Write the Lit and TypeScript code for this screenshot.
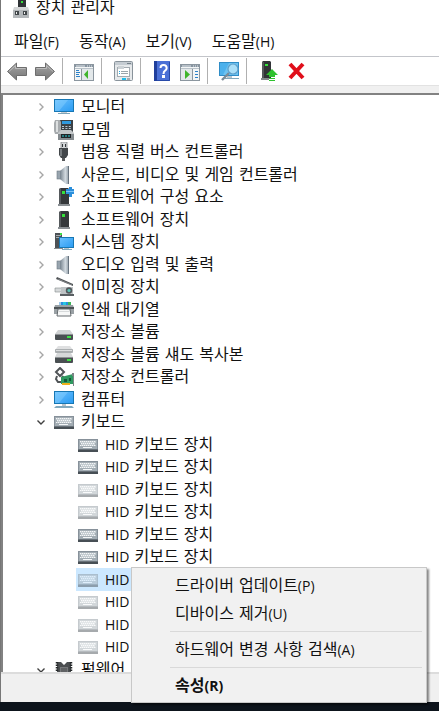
import { LitElement, html, css, svg, TemplateResult } from "lit";
import { customElement, property, state } from "lit/decorators.js";
import { classMap } from "lit/directives/class-map.js";

const screenPart = svg`
  <rect x="0" y="2" width="20" height="13" fill="#1777b4"/>
  <rect x="1" y="3" width="18" height="11" fill="url(#scr)"/>
  <path d="M1 3H14L5 14H1Z" fill="#8fd4ff" opacity=".4"/>
  <path d="M7 15h6v1H7z" fill="#c4ccd2"/><path d="M4 16h12v1H4z" fill="#7fa6ba"/>`;

const keyboardPart = svg`
  <rect x="0" y="4" width="20" height="13" fill="#87919a"/>
  <rect x="1" y="5" width="18" height="9" fill="#a3adb4"/>
  <path d="M2 6.500h16M3 8.500h14M2 10.500h16" stroke="#f4f6f8" stroke-dasharray="1.500 .5"/>
  <path d="M2 7.500h16M3 9.500h14" stroke="#c3cbd0"/>
  <path d="M5 12.500h9" stroke="#f4f6f8"/>
  <rect x="0" y="14" width="20" height="3" fill="#474f55"/><path d="M0 14.500h20" stroke="#69727a"/>`;

const speakerPart = svg`
  <rect x="3" y="6" width="4" height="8" fill="#98a4ae" stroke="#6d7983" stroke-width=".6"/>
  <path d="M6 6L12 1H15V19H12L6 14Z" fill="url(#metal)"/>
  <path d="M14 1h1v18h-1z" fill="#67737e"/>`;

const towerPart = svg`
  <path d="M5 2l2-1h7l1 1v15H5z" fill="#35383b"/><path d="M5 2l2-1v16H5z" fill="#55595c"/>
  <rect x="8" y="4" width="3" height="3" fill="#35e03b"/>
  <path d="M4 17h12v2H4z" fill="#8a8f93"/>`;

const driveBase = svg`
  <rect x="1" y="12" width="18" height="6" rx="1" fill="#4a4f52"/>
  <path d="M1 12.500h18" stroke="#8d9194"/>
  <rect x="13" y="14" width="4" height="2" fill="#3ee044"/>`;

const consoleFrame = svg`
  <rect x=".5" y="3.500" width="19" height="16" fill="#f3f5f6" stroke="#8b969f"/><path d="M1 4h18v2H1z" fill="#8794a0"/>
  <path d="M2 5h9M13 5h1M15 5h1M17 5h1" stroke="#e6ebef"/><path d="M1 7.500h18" stroke="#b9c2c9"/>`;

const ICONS: Record<string, TemplateResult> = {
  monitor: screenPart,
  computer: svg`
  <rect x="0" y="1" width="20" height="13" fill="#1777b4"/>
  <rect x="1" y="2" width="18" height="11" fill="url(#scr)"/>
  <path d="M1 2H14L5 13H1Z" fill="#8fd4ff" opacity=".4"/>
  <path d="M8 14h4v2H8z" fill="#bcc5cb"/><path d="M2 16h16l2 2H0z" fill="#82a9bd"/>`,
  keyboard: keyboardPart,
  ghost: svg`<g opacity=".48">${keyboardPart}</g>`,
  speaker: speakerPart,
  device: towerPart,
  modem: svg`
  <path d="M6 0h13v13H6z" fill="#3b4146"/><rect x="8" y="1" width="9" height="3" fill="#2f9ae0"/>
  <path d="M8 6.500h9M8 8.500h9" stroke="#b9c7d2" stroke-width="1.200" stroke-dasharray="2 1.400"/>
  <path d="M1 0h5l1 2v9l-1 3H1L0 11V3z" fill="#a7abae"/><path d="M2 1h2v11H2z" fill="#dcdfe0"/>
  <path d="M4 13l3-3h10l3 3v7H4z" fill="#c3c7c9"/><path d="M4 14h16v6H4z" fill="#868c90"/>
  <rect x="7" y="14" width="10" height="4" fill="#202528"/><path d="M8 16h8" stroke="#2dd2d8" stroke-dasharray="2 1"/>`,
  usb: svg`
  <path d="M7 0h6v7H7z" fill="#d2d5d7" stroke="#7c8083" stroke-width=".7"/>
  <path d="M8 2h1v3H8zM11 2h1v3h-1z" fill="#34373a"/>
  <path d="M5 6h9v7l-2 3H7l-2-3z" fill="#43474a"/><path d="M6 7h2v7H6z" fill="#787d80"/>
  <path d="M8 16h3v3H8z" fill="#57595b"/>`,
  component: svg`${towerPart}
  <path d="M12 2h3V0h3v2h2v5h-2v3h-3V7h-3z" fill="#2c8fdb"/><path d="M12 4.500h8" stroke="#7cc2f4"/>`,
  system: svg`
  <path d="M1 1h7v16H1z" fill="#4d5256"/><path d="M2 3.500h5M2 5.500h5" stroke="#a7acaf"/>
  <rect x="6" y="1" width="2" height="2" fill="#3ee044"/><path d="M0 16h9v1H0z" fill="#888d90"/>
  <rect x="5" y="5" width="15" height="11" fill="#1777b4"/><rect x="6" y="6" width="13" height="9" fill="url(#scr)"/>
  <path d="M10 16h5v1h-5z" fill="#bcc5cb"/><path d="M8 17h10v1H8z" fill="#82a9bd"/>`,
  imaging: svg`
  <path d="M3 0l16 7v2L2 2z" fill="#4d5154"/><path d="M4 2l14 6" stroke="#a2a6a9" stroke-width=".6"/>
  <path d="M1 11h8v4H1z" fill="#d6d9da" stroke="#85898c" stroke-width=".6"/>
  <path d="M7 10h12v8H6v-2h1z" fill="#bec3c5"/><path d="M6 17h14v2H6z" fill="#5a6063"/>
  <circle cx="15" cy="13.500" r="3.200" fill="#53595d"/><circle cx="15" cy="13.500" r="1.600" fill="#5cc4b7"/>`,
  printer: svg`
  <path d="M5 2h12v5H5z" fill="#2b8ede"/><path d="M9 2h3v4H9z" fill="#27c8e4"/><path d="M5 2h2v4H5z" fill="#9ec8e9"/><path d="M14 2h3v4h-3z" fill="#3cb45a"/>
  <path d="M1 5h18l1 3v6H0V8z" fill="#9aa1a5"/><path d="M0 7h20v2H0z" fill="#4b5154"/>
  <path d="M4 9h12l1 7H3z" fill="#f7f8f8" stroke="#656b6f"/><path d="M5 11.500h10" stroke="#d7dadb"/>`,
  volume: svg`<path d="M4 8h12l3 4H1z" fill="#d0d2d3"/>${driveBase}`,
  shadow: svg`
  <path d="M4 1h12l3 4H1z" fill="#dfe0e1"/><rect x="1" y="4" width="18" height="4" rx="1" fill="#abafb1"/><path d="M2 5.500h16" stroke="#dcdedf"/>
  <path d="M3 8h14l2 4H1z" fill="#d6d8d9"/>${driveBase}`,
  storage: svg`
  <path d="M6 1l4 4-4 4-4-4z" fill="none" stroke="#505457" stroke-width="2"/>
  <path d="M3 9l-1 3 2 3h3M8 9l2 2" fill="none" stroke="#505457" stroke-width="2"/>
  <path d="M7 10l12-3v10H7z" fill="#2f9a60"/><path d="M18 6h2v13h-1V9h-1z" fill="#7c8386"/>
  <path d="M10 12h3v3h-3zM15 11h2v3h-2z" fill="#14583a"/><path d="M8 16h8v2H8z" fill="#eeb11c"/>`,
  firmware: svg`
  <path d="M3 2h4l3 3 3-3h4v17H3z" fill="#4b4e50"/><path d="M6 7h8v12H6z" fill="#77797b"/><path d="M7 8h6v10H7z" fill="#606264"/>
  <path d="M3 2v17M17 2v17" stroke="#26292b" stroke-width="2.500" stroke-dasharray="1.500 1"/>`,
  app: svg`
  <path d="M7 0h8v11H7z" fill="#303336"/><rect x="10" y="3" width="2" height="2" fill="#35e03b"/>
  <path d="M3 9h14l1 3v8H2v-8z" fill="#d3d5d6"/><path d="M2 12h16v8H2z" fill="#b3b7ba"/>
  <path d="M4 13h4v4H4zM12 13h4v4h-4z" fill="#42474a"/><path d="M5 14h1v2H5zM13 14h1v2h-1z" fill="#eee"/>`,
  back: svg`<path d="M.5 10.500L9.500 2V6.500H19.500V14.500H9.500V19Z" fill="url(#arrow)" stroke="#6e6e6e"/><path d="M2 10.500L8.500 4.500v3h10" fill="none" stroke="#bcbcbc"/>`,
  forward: svg`<path d="M19.500 10.500L10.500 2V6.500H.5V14.500H10.500V19Z" fill="url(#arrow)" stroke="#6e6e6e"/><path d="M1.500 7.500h10v-3l6.500 6" fill="none" stroke="#bcbcbc"/>`,
  consoleTree: svg`${consoleFrame}
  <path d="M7.500 8v11" stroke="#8b969f"/><path d="M2 9.500h3M2 11.500h4M2 13.500h3M2 15.500h4" stroke="#2c82c9"/>
  <rect x="8" y="8" width="11" height="11" fill="#e3e8ea"/><path d="M14 9v9l-4-4.500z" fill="#3fb52b"/>`,
  properties: svg`
  <rect x="1.500" y=".5" width="18" height="19" rx="1" fill="#e6e9eb" stroke="#89939b"/><path d="M2 1h17v3H2z" fill="#c5ccd2"/>
  <path d="M14 2.500h4" stroke="#75818a"/><rect x="4.500" y="6.500" width="12" height="9" fill="#fff" stroke="#a3abb1"/>
  <path d="M5 5h6v3H5z" fill="#ccd2d6"/><path d="M8 10.500h7M8 12.500h7" stroke="#9ba5ac"/>
  <path d="M6 10.500h1M6 12.500h1" stroke="#26a9df"/><path d="M9 18h4" stroke="#21bdec" stroke-width="2"/><path d="M14 18h3" stroke="#a3abb1" stroke-width="2"/>`,
  help: svg`
  <rect x="2" y="0" width="16" height="20" fill="#4a70d6"/><path d="M2 0h3v20H2z" fill="#203f9c"/><path d="M5 19.500h12.500V1" fill="none" stroke="#2749a8"/>
  <path d="M8.500 7Q8.500 4 11.500 4T14.700 7Q14.700 8.500 13 9.700Q11.500 10.700 11.500 13" fill="none" stroke="#fff" stroke-width="2"/><rect x="10" y="14" width="3" height="3" fill="#fff"/>`,
  actions: svg`${consoleFrame}
  <rect x="1" y="8" width="11" height="11" fill="#e3e8ea"/><path d="M12.500 8v11" stroke="#8b969f"/>
  <path d="M15 10.500h3M15 13.500h3M15 16.500h3" stroke="#2c82c9"/><path d="M5 9v9l5-4.500z" fill="#3fb52b"/>`,
  scan: svg`
  <rect x="0" y="1" width="20" height="14" fill="#2f8dc7"/><rect x="1" y="2" width="18" height="12" fill="#6cc3f2"/>
  <path d="M1 2h9L4 14H1z" fill="#4cb1ec"/><path d="M8 15h5v2H8z" fill="#b9c4cb"/><path d="M6 17h14v1H6z" fill="#82a9bd"/>
  <path d="M3 19l7-7" stroke="#7a8b97" stroke-width="2.400"/><circle cx="14" cy="8" r="5" fill="#aadff8" stroke="#5f9fc9" stroke-width="1.200"/>`,
  update: svg`
  <path d="M4 1l1-1h7l1 1v16H4z" fill="#303336"/><path d="M4 1h2v16H4z" fill="#53575a"/><rect x="7" y="3" width="3" height="2" fill="#35e03b"/>
  <path d="M3 17h8v2H3z" fill="#84898c"/><path d="M14 8l6 6h-3v2h-6v-2H8z" fill="#2fc12f"/><path d="M11 17.500h6M11 19.500h6" stroke="#2fc12f"/>`,
  remove: svg`<path d="M4 3l13 14M17 3L4 17" stroke="#e00f1b" stroke-width="4"/>`,
};

@customElement("dm-icon")
class DmIcon extends LitElement {
  @property() name = "";
  static styles = css`
    :host { display: block; width: 20px; height: 20px; flex: none; }
    svg { display: block; width: 100%; height: 100%; }
  `;
  render() {
    return html`<svg viewBox="0 0 20 20" aria-hidden="true">
      <defs>
        <linearGradient id="scr" x2="1" y2="1"><stop offset="0" stop-color="#6cc0ff"/><stop offset="1" stop-color="#2b9cf2"/></linearGradient>
        <linearGradient id="metal"><stop offset="0" stop-color="#76838e"/><stop offset=".6" stop-color="#d2dae0"/><stop offset="1" stop-color="#8d99a3"/></linearGradient>
        <linearGradient id="arrow" x2="0" y2="1"><stop offset="0" stop-color="#a4a4a4"/><stop offset="1" stop-color="#777"/></linearGradient>
      </defs>${ICONS[this.name]}
    </svg>`;
  }
}

interface Category { icon: string; label: string; }

const CATEGORIES: Category[] = [
  { icon: "monitor", label: "모니터" },
  { icon: "modem", label: "모뎀" },
  { icon: "usb", label: "범용 직렬 버스 컨트롤러" },
  { icon: "speaker", label: "사운드, 비디오 및 게임 컨트롤러" },
  { icon: "component", label: "소프트웨어 구성 요소" },
  { icon: "device", label: "소프트웨어 장치" },
  { icon: "system", label: "시스템 장치" },
  { icon: "speaker", label: "오디오 입력 및 출력" },
  { icon: "imaging", label: "이미징 장치" },
  { icon: "printer", label: "인쇄 대기열" },
  { icon: "volume", label: "저장소 볼륨" },
  { icon: "shadow", label: "저장소 볼륨 섀도 복사본" },
  { icon: "storage", label: "저장소 컨트롤러" },
  { icon: "computer", label: "컴퓨터" },
];

const KEYBOARDS = [true, true, false, false, true, true, false, false, false, false];

const MENUS = [["파일", "F"], ["동작", "A"], ["보기", "V"], ["도움말", "H"]];

const TOOLS: string[][][] = [
  [["back", "뒤로"], ["forward", "앞으로"]],
  [["consoleTree", "콘솔 트리 표시"]],
  [["properties", "속성"]],
  [["help", "도움말"], ["actions", "작업 창 표시"]],
  [["scan", "하드웨어 변경 사항 검색"]],
  [["update", "드라이버 업데이트"], ["remove", "디바이스 제거"]],
];

@customElement("app-root")
class AppRoot extends LitElement {
  @state() private selected = 6;

  static styles = css`
    :host {
      display: flex; flex-direction: column; position: relative; height: 100vh; box-sizing: border-box;
      overflow: hidden; background: #0d141c; color: #111;
      font: 16px/22px "DejaVu Sans", "Noto Sans CJK KR", sans-serif;
    }
    button { font: inherit; color: inherit; background: none; border: 0; padding: 0; margin: 0; text-align: left; white-space: nowrap; }
    .latin { font-family: "Open Sans", sans-serif; font-size: 14px; }
    .window { flex: 1; min-height: 0; display: flex; flex-direction: column; background: #f0f0f0; border-left: 1px solid #777; margin-bottom: 9px; }
    .title { display: flex; align-items: center; gap: 5px; height: 16px; padding: 0 10px 13px; background: #fff; }
    .title h1 { font: inherit; margin: 0; }
    .menubar { display: flex; gap: 20px; padding: 2px 13px 3px; background: #fff; border-bottom: 1px solid #c3c5ca; }
    .toolbar { display: flex; align-items: center; height: 28px; padding-left: 2px; background: #fff; border-bottom: 1px solid #e2e2e2; }
    .group { display: flex; align-items: center; }
    .group + .group::before { content: ""; width: 1px; height: 26px; margin: 0 7px 0 3px; background: #b0b0b0; }
    .tool { width: 28px; height: 26px; display: grid; place-items: center; }
    .tree { flex: 1; min-height: 0; overflow: hidden; margin-top: 7px; padding-top: 1px; background: #fff; border: solid #828282; border-width: 2px 0 0 2px; }
    ul { list-style: none; margin: 0; padding: 0; }
    .row { display: flex; align-items: center; height: 22px; padding-left: 33px; white-space: nowrap; }
    .row.tall { height: 23px; }
    .toggle { width: 10px; height: 20px; margin-right: 8px; display: grid; place-items: center; }
    .toggle svg { width: 10px; height: 10px; fill: none; stroke: #a6a6a6; stroke-width: 1.4; }
    .toggle.open svg { stroke: #404040; }
    .label { margin-left: 7px; }
    .child { padding-left: 73px; }
    .device { display: flex; align-items: center; height: 100%; padding: 0 5px 0 2px; }
    .selected .device { background: #cce8ff; }
    .status { height: 28px; border-top: 2px solid #dcdcdc; }
    .context {
      position: absolute; left: 131px; bottom: 8px; width: 296px; box-sizing: border-box; padding: 4px 2px 2px;
      display: flex; flex-direction: column; background: #f1f1f1; border: 1px solid #c8c8c8; box-shadow: 2px 2px 2px #0007;
    }
    .context button { height: 28px; padding-left: 41px; }
    .context .default { font-weight: 700; }
    .context hr { width: auto; height: 1px; margin: 3px 2px 4px 36px; border: 0; background: #d9d9d9; }
  `;

  private category(c: Category, open: boolean, index: number) {
    return html`<div class=${classMap({ row: true, tall: index % 2 === 1 })}>
      <button class=${classMap({ toggle: true, open })} aria-label=${open ? "축소" : "확장"}>
        <svg viewBox="0 0 10 10"><path d=${open ? "M1.500 3.500L5 7l3.500-3.500" : "M3.500 1.500L7 5l-3.500 3.500"}/></svg>
      </button>
      <dm-icon name=${c.icon}></dm-icon><span class="label">${c.label}</span>
    </div>`;
  }

  render() {
    return html`
      <main class="window">
        <header class="title"><dm-icon name="app"></dm-icon><h1>장치 관리자</h1></header>
        <nav class="menubar">
          ${MENUS.map(([name, key]) => html`<button>${name}<span class="latin">(${key})</span></button>`)}
        </nav>
        <div class="toolbar" role="toolbar">
          ${TOOLS.map((g) => html`<div class="group">${g.map(([icon, label]) => html`<button class="tool" aria-label=${label}><dm-icon name=${icon}></dm-icon></button>`)}</div>`)}
        </div>
        <ul class="tree" role="tree">
          ${CATEGORIES.map((c, i) => html`<li role="treeitem" aria-expanded="false">${this.category(c, false, i)}</li>`)}
          <li role="treeitem" aria-expanded="true">
            ${this.category({ icon: "keyboard", label: "키보드" }, true, 14)}
            <ul role="group">
              ${KEYBOARDS.map((present, i) => html`
                <li role="treeitem" aria-selected=${i === this.selected ? "true" : "false"}
                  class=${classMap({ row: true, child: true, tall: i % 2 === 0, selected: i === this.selected })}>
                  <button class="device" @click=${() => (this.selected = i)}>
                    <dm-icon name=${present ? "keyboard" : "ghost"}></dm-icon>
                    <span class="label"><span class="latin">HID</span> 키보드 장치</span>
                  </button>
                </li>`)}
            </ul>
          </li>
          <li role="treeitem" aria-expanded="true">${this.category({ icon: "firmware", label: "펌웨어" }, true, 25)}</li>
        </ul>
        <footer class="status"></footer>
      </main>
      <div class="context" role="menu">
        <button role="menuitem">드라이버 업데이트<span class="latin">(P)</span></button>
        <button role="menuitem">디바이스 제거<span class="latin">(U)</span></button>
        <hr>
        <button role="menuitem">하드웨어 변경 사항 검색<span class="latin">(A)</span></button>
        <hr>
        <button role="menuitem" class="default">속성<span class="latin">(R)</span></button>
      </div>`;
  }
}
